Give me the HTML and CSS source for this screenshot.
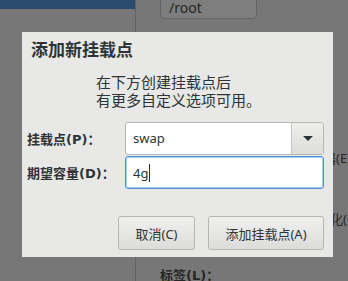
FILE: index.html
```html
<!DOCTYPE html>
<html lang="zh-CN">
    <head>
        <meta charset="UTF-8" />
        <meta name="viewport" content="width=device-width, initial-scale=1.0" />
        <title>添加新挂载点</title>
        <link rel="stylesheet" href="styles.css">
    </head>
    <body>
        <div class="app">
            <div class="side-panel">
                <div class="side-header"></div>
            </div>
            <div class="main-panel">
                <div class="mount-box">/root</div>
                <div class="bg-row row-device">容器(E)</div>
                <div class="bg-row row-format">格式化(O)</div>
                <div class="bg-row row-label">标签(L)：</div>
            </div>
        </div>

        <div class="dialog">
            <div class="dialog-title">添加新挂载点</div>
            <div class="dialog-desc">在下方创建挂载点后<br>有更多自定义选项可用。</div>

            <div class="form">
                <label class="form-label">挂载点(P)：</label>
                <div class="combo">
                    <div class="combo-text">swap</div>
                    <div class="combo-button"><span class="arrow"></span></div>
                </div>
                <label class="form-label">期望容量(D)：</label>
                <div class="entry focused">4g<span class="cursor"></span></div>
            </div>

            <div class="actions">
                <button class="btn btn-cancel">取消(C)</button>
                <button class="btn btn-add">添加挂载点(A)</button>
            </div>
        </div>
    </body>
</html>
```

FILE: styles.css
```css
* {
    box-sizing: border-box;
}

body {
    margin: 0;
    width: 348px;
    height: 281px;
    overflow: hidden;
    position: relative;
    background: #777777;
    font-family: "Noto Sans", "Noto Sans CJK SC", sans-serif;
    font-size: 13px;
    color: #2e3436;
}

/* dimmed window behind the dialog */
.app {
    display: flex;
    height: 100%;
}

.side-panel {
    flex: 0 0 136px;
    border-right: 1px solid #626262;
}

.side-header {
    height: 9px;
    background: #2a4a6e;
}

.main-panel {
    flex: 1;
    min-width: 0;
    display: flex;
    flex-direction: column;
    padding-left: 24px;
    color: #262626;
}

.mount-box {
    width: 97px;
    height: 31px;
    margin-top: -8px;
    padding: 5px 0 0 8px;
    background: #7e7e7e;
    border: 1px solid #646464;
    border-radius: 4px;
    font-size: 14px;
    line-height: 20px;
}

.bg-row {
    white-space: nowrap;
    line-height: 18px;
}

.row-device {
    margin-top: 130px;
    padding-left: 150px;
}

.row-format {
    margin-top: 43px;
    padding-left: 144px;
}

.row-label {
    margin-top: 39px;
    font-family: "DejaVu Sans", "Noto Sans CJK SC", sans-serif;
    font-weight: bold;
}

/* dialog */
.dialog {
    position: absolute;
    left: 22px;
    top: 32px;
    width: 311px;
    height: 225px;
    background: #e8e8e7;
    padding: 8px 9px 0 5px;
}

.dialog-title {
    padding-left: 4px;
    font-size: 17px;
    font-weight: bold;
    line-height: 20px;
}

.dialog-desc {
    margin-top: 13px;
    padding-left: 69px;
    font-size: 15px;
    line-height: 18px;
}

.form {
    margin-top: 13px;
    display: grid;
    grid-template-columns: 98px 199px;
    row-gap: 1px;
    align-items: center;
}

.form-label {
    font-family: "DejaVu Sans", "Noto Sans CJK SC", sans-serif;
    font-weight: bold;
    white-space: nowrap;
}

.combo {
    display: flex;
    height: 33px;
    background: #ffffff;
    border: 1px solid #b6b6b3;
    border-radius: 3px;
    overflow: hidden;
}

.combo-text {
    flex: 1;
    padding-left: 7px;
    line-height: 31px;
    font-size: 13px;
}

.combo-button {
    width: 32px;
    display: flex;
    justify-content: center;
    align-items: center;
    border-left: 1px solid #c4c4c1;
    background: linear-gradient(#eeeeec, #dddddb);
}

.arrow {
    width: 0;
    height: 0;
    border-left: 5px solid transparent;
    border-right: 5px solid transparent;
    border-top: 5px solid #2e3436;
}

.entry {
    display: flex;
    align-items: center;
    height: 33px;
    padding-left: 7px;
    background: #ffffff;
    border: 1px solid #4a90d9;
    border-radius: 3px;
    box-shadow: inset 0 0 0 1px rgba(74, 144, 217, 0.45);
}

.cursor {
    width: 1px;
    height: 18px;
    margin-left: 1px;
    background: #2e3436;
}

.actions {
    margin-top: 27px;
    display: flex;
    justify-content: flex-end;
    gap: 13px;
}

.btn {
    height: 34px;
    font-family: inherit;
    font-size: 13px;
    color: #2e3436;
    background: linear-gradient(#f0f0ee, #dcdcda);
    border: 1px solid #b6b6b3;
    border-radius: 3px;
}

.btn-cancel {
    width: 77px;
}

.btn-add {
    width: 116px;
}
```
